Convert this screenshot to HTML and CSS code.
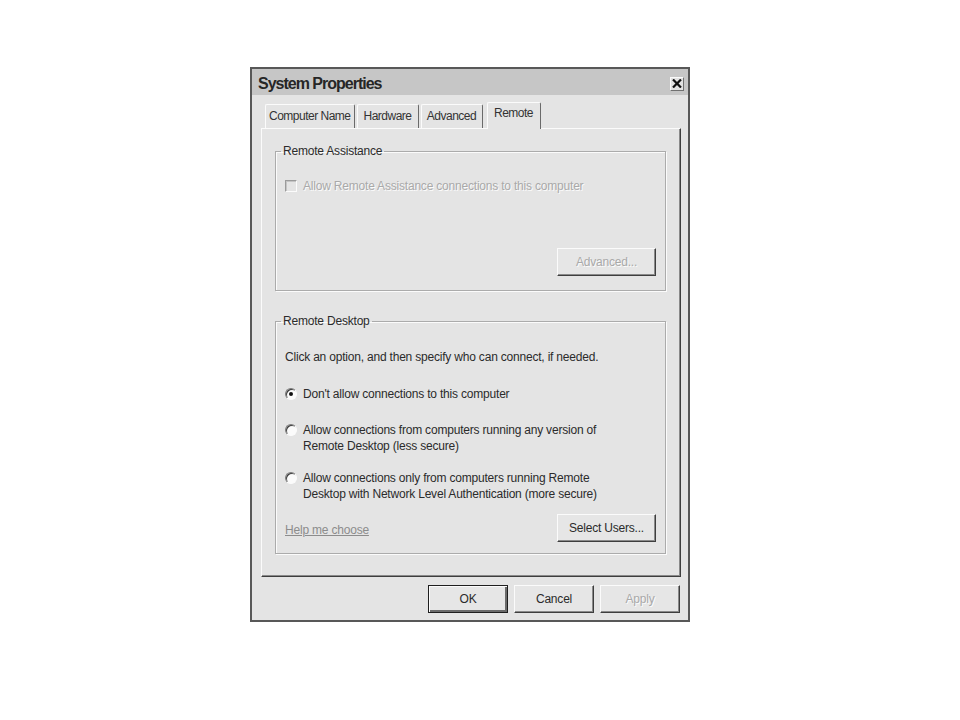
FILE: index.html
```html
<!DOCTYPE html>
<html lang="en">
<head>
<meta charset="utf-8">
<title>System Properties</title>
<link rel="stylesheet" href="styles.css">
</head>
<body>
<div class="page">
  <div class="dialog">
    <div class="titlebar">
      <span class="title">System Properties</span>
      <span class="close">
        <svg width="10" height="9" viewBox="0 0 10 9"><path d="M1 0.5 L9 8.5 M9 0.5 L1 8.5" stroke="#111" stroke-width="2.2" fill="none"/></svg>
      </span>
    </div>
    <div class="body">
      <div class="tabs">
        <div class="tab">Computer Name</div>
        <div class="tab">Hardware</div>
        <div class="tab">Advanced</div>
        <div class="tab active">Remote</div>
      </div>
      <div class="panel">
        <fieldset class="group ra">
          <legend>Remote Assistance</legend>
          <div class="option disabled"><span class="checkbox"></span><span>Allow Remote Assistance connections to this computer</span></div>
          <div class="group-actions"><span class="btn disabled">Advanced...</span></div>
        </fieldset>
        <fieldset class="group rd">
          <legend>Remote Desktop</legend>
          <p class="intro">Click an option, and then specify who can connect, if needed.</p>
          <div class="option first"><span class="radio checked"></span><span>Don't allow connections to this computer</span></div>
          <div class="option second"><span class="radio"></span><span>Allow connections from computers running any version of<br>Remote Desktop (less secure)</span></div>
          <div class="option third"><span class="radio"></span><span>Allow connections only from computers running Remote<br>Desktop with Network Level Authentication (more secure)</span></div>
          <div class="group-footer"><span class="link">Help me choose</span><span class="btn">Select Users...</span></div>
        </fieldset>
      </div>
      <div class="dialog-buttons">
        <span class="btn wide default">OK</span>
        <span class="btn wide">Cancel</span>
        <span class="btn wide disabled">Apply</span>
      </div>
    </div>
  </div>
</div>
</body>
</html>
```
FILE: styles.css
```css
html, body {
  margin: 0;
  background: #ffffff;
}
body {
  font-family: "Liberation Sans", Arial, sans-serif;
  font-size: 12px;
  letter-spacing: -0.2px;
  line-height: 16px;
  color: #2b2b2b;
}
.page {
  padding: 67px 0 0 250px;
}
.dialog {
  width: 440px;
  height: 555px;
  box-sizing: border-box;
  border: 2px solid #585858;
  background: #e4e4e4;
  display: flex;
  flex-direction: column;
}
.titlebar {
  flex: none;
  height: 26px;
  box-sizing: border-box;
  background: #c6c6c6;
  display: flex;
  align-items: center;
  justify-content: space-between;
  padding: 3px 4px 0 6px;
}
.title {
  font-weight: bold;
  font-size: 16px;
  letter-spacing: -1px;
  color: #262626;
}
.close {
  width: 14px;
  height: 14px;
  box-sizing: border-box;
  background: #e2e2e2;
  border-top: 1px solid #fafafa;
  border-left: 1px solid #fafafa;
  border-right: 1px solid #707070;
  border-bottom: 1px solid #707070;
  display: flex;
  align-items: center;
  justify-content: center;
}
.body {
  flex: 1;
  display: flex;
  flex-direction: column;
  padding: 7px 7px 7px 9px;
}
.tabs {
  height: 26px;
  display: flex;
  align-items: flex-end;
  gap: 2px;
  padding-left: 4px;
  position: relative;
  z-index: 1;
}
.tab {
  min-width: 62px;
  height: 24px;
  box-sizing: border-box;
  padding: 0 3px;
  text-align: center;
  letter-spacing: -0.5px;
  line-height: 22px;
  border-top: 1px solid #fbfbfb;
  border-left: 1px solid #fbfbfb;
  border-right: 1px solid #6a6a6a;
  border-radius: 2px 2px 0 0;
  color: #333;
}
.tab.active {
  min-width: 54px;
  height: 27px;
  margin-bottom: -1px;
  margin-left: 2px;
  padding: 0 5px 3px;
  background: #e4e4e4;
  line-height: 20px;
}
.panel {
  flex: none;
  height: 449px;
  box-sizing: border-box;
  border-top: 1px solid #fbfbfb;
  border-left: 1px solid #fbfbfb;
  border-right: 1px solid #3e3e3e;
  border-bottom: 1px solid #3e3e3e;
  box-shadow: inset -1px -1px 0 #8a8a8a;
  padding: 14px 14px 0 13px;
}
.group {
  margin: 0;
  min-width: 0;
  border: 1px solid #ababab;
  box-shadow: inset 1px 1px 0 #fbfbfb, 1px 1px 0 #fbfbfb;
  padding: 0 9px 14px 9px;
}
.group legend {
  padding: 0 2px;
  margin-left: -4px;
  line-height: 16px;
}
.group.rd {
  margin-top: 22px;
  padding-bottom: 11px;
}
.option {
  display: flex;
  align-items: flex-start;
  gap: 6px;
}
.ra .option {
  margin-top: 19px;
}
.option.disabled {
  color: #a9a9a9;
  text-shadow: 1px 1px 0 #fbfbfb;
}
.checkbox {
  flex: none;
  width: 12px;
  height: 12px;
  margin-top: 2px;
  box-sizing: border-box;
  border-top: 1px solid #9a9a9a;
  border-left: 1px solid #9a9a9a;
  border-right: 1px solid #fbfbfb;
  border-bottom: 1px solid #fbfbfb;
  box-shadow: inset 1px 1px 0 #c4c4c4;
  background: #e4e4e4;
}
.group-actions {
  margin-top: 54px;
  display: flex;
  justify-content: flex-end;
}
.intro {
  margin: 20px 0 0;
}
.option.first {
  margin-top: 21px;
}
.option.second {
  margin-top: 20px;
}
.option.third {
  margin-top: 16px;
}
.radio {
  flex: none;
  position: relative;
  width: 12px;
  height: 12px;
  margin-top: 2px;
  box-sizing: border-box;
  border-radius: 50%;
  border: 1px solid;
  border-color: #7a7a7a #fbfbfb #fbfbfb #7a7a7a;
  box-shadow: inset 1px 1px 0 #3c3c3c;
  background: #fbfbfb;
}
.radio.checked::after {
  content: "";
  position: absolute;
  left: 3px;
  top: 3px;
  width: 4px;
  height: 4px;
  border-radius: 50%;
  background: #111;
}
.group-footer {
  margin-top: 12px;
  display: flex;
  align-items: center;
  justify-content: space-between;
}
.link {
  color: #8c8c8c;
  text-decoration: underline;
  padding-top: 4px;
}
.btn {
  width: 99px;
  height: 28px;
  box-sizing: border-box;
  display: flex;
  align-items: center;
  justify-content: center;
  background: #e6e6e6;
  border-top: 1px solid #fbfbfb;
  border-left: 1px solid #fbfbfb;
  border-right: 1px solid #3e3e3e;
  border-bottom: 1px solid #3e3e3e;
  box-shadow: inset -1px -1px 0 #8a8a8a;
  color: #2b2b2b;
}
.btn.disabled {
  color: #a9a9a9;
  text-shadow: 1px 1px 0 #fbfbfb;
}
.dialog-buttons {
  margin-top: 8px;
  display: flex;
  justify-content: flex-end;
  gap: 6px;
  padding-right: 1px;
}
.btn.wide {
  width: 80px;
}
.btn.default {
  border: 1px solid #1e1e1e;
  box-shadow: inset 1px 1px 0 #fbfbfb, inset -2px -2px 0 #6a6a6a;
}
```
